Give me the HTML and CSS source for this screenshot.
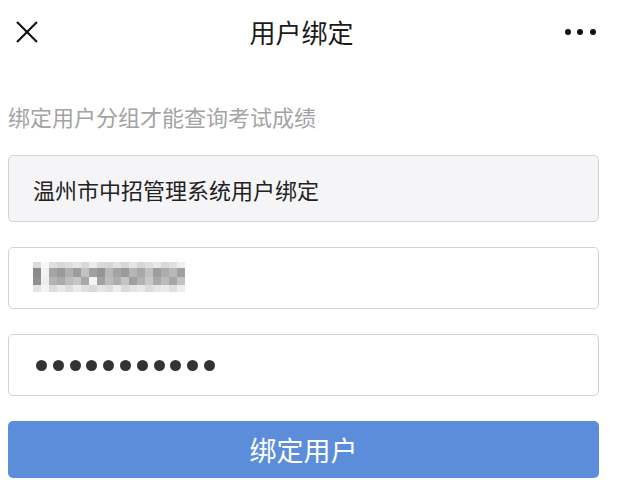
FILE: index.html
```html
<!DOCTYPE html>
<html>
    <head>
        <meta charset="utf-8"/>
        <title>用户绑定</title>
        <link rel="stylesheet" href="styles.css">
    </head>

    <body>
        <!-- top navigation bar -->
        <div class="topbar">
            <svg class="close" width="22" height="22" viewBox="0 0 22 22">
                <line x1="1" y1="1" x2="21" y2="21"/>
                <line x1="21" y1="1" x2="1" y2="21"/>
            </svg>
            <div class="title">用户绑定</div>
            <div class="more">
                <span></span><span></span><span></span>
            </div>
        </div>

        <p class="hint">绑定用户分组才能查询考试成绩</p>

        <div class="form">
            <div class="field field-group">温州市中招管理系统用户绑定</div>

            <!-- phone number, blurred in the screenshot -->
            <div class="field field-phone">
                <svg class="mosaic" width="152" height="30" viewBox="0 0 152 30" shape-rendering="crispEdges">
                    <g>
                        <rect x="0" y="0" width="8" height="6" fill="#dcdcdc"/>
                        <rect x="8" y="0" width="8" height="6" fill="#f6f6f6"/>
                        <rect x="16" y="0" width="8" height="6" fill="#e0e0e0"/>
                        <rect x="24" y="0" width="8" height="6" fill="#d8d8d8"/>
                        <rect x="32" y="0" width="8" height="6" fill="#dedede"/>
                        <rect x="40" y="0" width="8" height="6" fill="#e6e6e6"/>
                        <rect x="48" y="0" width="8" height="6" fill="#d9d9d9"/>
                        <rect x="56" y="0" width="8" height="6" fill="#ececec"/>
                        <rect x="64" y="0" width="8" height="6" fill="#dadada"/>
                        <rect x="72" y="0" width="8" height="6" fill="#d6d6d6"/>
                        <rect x="80" y="0" width="8" height="6" fill="#e2e2e2"/>
                        <rect x="88" y="0" width="8" height="6" fill="#d8d8d8"/>
                        <rect x="96" y="0" width="8" height="6" fill="#e5e5e5"/>
                        <rect x="104" y="0" width="8" height="6" fill="#d7d7d7"/>
                        <rect x="112" y="0" width="8" height="6" fill="#dfdfdf"/>
                        <rect x="120" y="0" width="8" height="6" fill="#e8e8e8"/>
                        <rect x="128" y="0" width="8" height="6" fill="#d9d9d9"/>
                        <rect x="136" y="0" width="8" height="6" fill="#e1e1e1"/>
                        <rect x="144" y="0" width="8" height="6" fill="#eeeeee"/>
                    </g>
                    <g>
                        <rect x="0" y="6" width="8" height="9" fill="#8a8a8a"/>
                        <rect x="8" y="6" width="8" height="9" fill="#f2f2f2"/>
                        <rect x="16" y="6" width="8" height="9" fill="#a5a5a5"/>
                        <rect x="24" y="6" width="8" height="9" fill="#9a9a9a"/>
                        <rect x="32" y="6" width="8" height="9" fill="#b0b0b0"/>
                        <rect x="40" y="6" width="8" height="9" fill="#9c9c9c"/>
                        <rect x="48" y="6" width="8" height="9" fill="#c2c2c2"/>
                        <rect x="56" y="6" width="8" height="9" fill="#a0a0a0"/>
                        <rect x="64" y="6" width="8" height="9" fill="#959595"/>
                        <rect x="72" y="6" width="8" height="9" fill="#b8b8b8"/>
                        <rect x="80" y="6" width="8" height="9" fill="#a3a3a3"/>
                        <rect x="88" y="6" width="8" height="9" fill="#9a9a9a"/>
                        <rect x="96" y="6" width="8" height="9" fill="#b5b5b5"/>
                        <rect x="104" y="6" width="8" height="9" fill="#a8a8a8"/>
                        <rect x="112" y="6" width="8" height="9" fill="#c0c0c0"/>
                        <rect x="120" y="6" width="8" height="9" fill="#9e9e9e"/>
                        <rect x="128" y="6" width="8" height="9" fill="#acacac"/>
                        <rect x="136" y="6" width="8" height="9" fill="#b9b9b9"/>
                        <rect x="144" y="6" width="8" height="9" fill="#a0a0a0"/>
                    </g>
                    <g>
                        <rect x="0" y="15" width="8" height="8" fill="#909090"/>
                        <rect x="8" y="15" width="8" height="8" fill="#eeeeee"/>
                        <rect x="16" y="15" width="8" height="8" fill="#b4b4b4"/>
                        <rect x="24" y="15" width="8" height="8" fill="#aaaaaa"/>
                        <rect x="32" y="15" width="8" height="8" fill="#bdbdbd"/>
                        <rect x="40" y="15" width="8" height="8" fill="#c6c6c6"/>
                        <rect x="48" y="15" width="8" height="8" fill="#a8a8a8"/>
                        <rect x="56" y="15" width="8" height="8" fill="#f4f4f4"/>
                        <rect x="64" y="15" width="8" height="8" fill="#a2a2a2"/>
                        <rect x="72" y="15" width="8" height="8" fill="#bcbcbc"/>
                        <rect x="80" y="15" width="8" height="8" fill="#aeaeae"/>
                        <rect x="88" y="15" width="8" height="8" fill="#c4c4c4"/>
                        <rect x="96" y="15" width="8" height="8" fill="#9f9f9f"/>
                        <rect x="104" y="15" width="8" height="8" fill="#b2b2b2"/>
                        <rect x="112" y="15" width="8" height="8" fill="#c8c8c8"/>
                        <rect x="120" y="15" width="8" height="8" fill="#a9a9a9"/>
                        <rect x="128" y="15" width="8" height="8" fill="#bbbbbb"/>
                        <rect x="136" y="15" width="8" height="8" fill="#a6a6a6"/>
                        <rect x="144" y="15" width="8" height="8" fill="#c2c2c2"/>
                    </g>
                    <g>
                        <rect x="0" y="23" width="8" height="7" fill="#e4e4e4"/>
                        <rect x="8" y="23" width="8" height="7" fill="#f4f4f4"/>
                        <rect x="16" y="23" width="8" height="7" fill="#dcdcdc"/>
                        <rect x="24" y="23" width="8" height="7" fill="#e8e8e8"/>
                        <rect x="32" y="23" width="8" height="7" fill="#dddddd"/>
                        <rect x="40" y="23" width="8" height="7" fill="#ebebeb"/>
                        <rect x="48" y="23" width="8" height="7" fill="#e0e0e0"/>
                        <rect x="56" y="23" width="8" height="7" fill="#d9d9d9"/>
                        <rect x="64" y="23" width="8" height="7" fill="#e6e6e6"/>
                        <rect x="72" y="23" width="8" height="7" fill="#dedede"/>
                        <rect x="80" y="23" width="8" height="7" fill="#ececec"/>
                        <rect x="88" y="23" width="8" height="7" fill="#dadada"/>
                        <rect x="96" y="23" width="8" height="7" fill="#e3e3e3"/>
                        <rect x="104" y="23" width="8" height="7" fill="#e9e9e9"/>
                        <rect x="112" y="23" width="8" height="7" fill="#dbdbdb"/>
                        <rect x="120" y="23" width="8" height="7" fill="#e5e5e5"/>
                        <rect x="128" y="23" width="8" height="7" fill="#eaeaea"/>
                        <rect x="136" y="23" width="8" height="7" fill="#dfdfdf"/>
                        <rect x="144" y="23" width="8" height="7" fill="#ededed"/>
                    </g>
                </svg>
            </div>

            <!-- password, shown as dots -->
            <div class="field field-password">
                <span></span><span></span><span></span><span></span>
                <span></span><span></span><span></span><span></span>
                <span></span><span></span><span></span>
            </div>

            <button class="submit">绑定用户</button>
        </div>
    </body>
</html>
```

FILE: styles.css
```css
/* whole page */
body {
    margin: 0;
    background-color: #ffffff;
    font-family: "Noto Sans CJK SC", "Noto Sans", sans-serif;
    color: #222222;
}

/* navigation bar at the top */
.topbar {
    height: 63px;
    display: flex;
    align-items: center;
    justify-content: space-between;
    padding: 0 26px 0 16px;
}

.close line {
    stroke: #111111;
    stroke-width: 2.2;
}

.title {
    font-size: 26px;
    font-weight: 400;
    color: #1a1a1a;
    line-height: 32px;
}

.more {
    display: flex;
    gap: 6.5px;
}

.more span {
    width: 6px;
    height: 6px;
    border-radius: 50%;
    background-color: #111111;
}

/* grey hint line */
.hint {
    margin: 37px 0 0 0;
    padding-left: 8px;
    font-size: 22px;
    line-height: 32px;
    color: #a3a3a3;
}

/* form with the three fields and the button */
.form {
    width: 591px;
    margin: 23px 0 0 8px;
    display: flex;
    flex-direction: column;
    gap: 25px;
}

.field {
    box-sizing: border-box;
    border: 1px solid #d2d2d4;
    border-radius: 5px;
    background-color: #ffffff;
    padding-left: 24px;
    display: flex;
    align-items: center;
}

.field-group {
    height: 67px;
    background-color: #f5f5f7;
    font-size: 22px;
    color: #222222;
}

.field-phone {
    height: 62px;
    padding-bottom: 3px;
}

.field-password {
    height: 62px;
    padding-left: 27px;
    gap: 5.8px;
}

.field-password span {
    width: 11px;
    height: 11px;
    border-radius: 50%;
    background-color: #333333;
}

.submit {
    height: 57px;
    border: none;
    border-radius: 5px;
    background-color: #5b8ddb;
    color: #ffffff;
    font-family: "Noto Sans CJK SC", "Noto Sans", sans-serif;
    font-size: 27px;
    font-weight: 400;
    padding: 0;
}
```
